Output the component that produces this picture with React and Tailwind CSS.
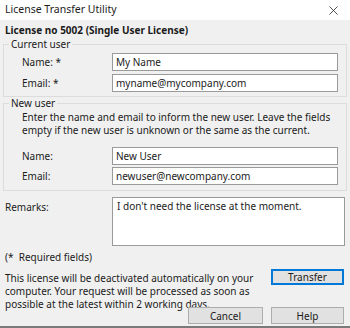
import { X } from 'lucide-react';

function Field({ label, value }) {
  return (
    <div className="flex items-center h-[18px]">
      <span className="w-[108px] pl-[18px]">{label}</span>
      <div className="flex-1 h-[18px] bg-white border border-[#9a9a9a] px-[3px] leading-[16px]">{value}</div>
    </div>
  );
}

export default function App() {
  return (
    <div
      className="w-[350px] h-[328px] bg-[#f0f0f0] text-[#1b1b1b] text-[10px] overflow-hidden flex flex-col border-b-2 border-[#7a7a7a]"
      style={{ fontFamily: '"Noto Sans", "Open Sans", sans-serif' }}
    >
      <div className="h-[20px] shrink-0 bg-white flex items-center justify-between pl-[5px] pr-[9px] text-[10.5px]">
        <span>License Transfer Utility</span>
        <X size={15} strokeWidth={1.2} />
      </div>

      <div className="px-[3px] pt-[3px] flex flex-col flex-1">
        <div className="font-bold pl-[2px] h-[14px] leading-[14px]">License no 5002 (Single User License)</div>

        <fieldset className="border border-[#dcdcdc] mt-[1px] pb-[4px] pr-[8px] flex flex-col gap-[3px]">
          <legend className="ml-[5px] px-[2px] leading-[12px]">Current user</legend>
          <div className="h-0" />
          <Field label="Name: *" value="My Name" />
          <Field label="Email: *" value="myname@mycompany.com" />
        </fieldset>

        <fieldset className="border border-[#dcdcdc] pb-[5px] pr-[8px] flex flex-col gap-[2px]">
          <legend className="ml-[5px] px-[2px] leading-[12px]">New user</legend>
          <p className="pl-[18px] leading-[13px] mt-[2px] mb-[8px]">
            Enter the name and email to inform the new user. Leave the fields empty if the new user is unknown or the same as the current.
          </p>
          <Field label="Name:" value="New User" />
          <Field label="Email:" value="newuser@newcompany.com" />
        </fieldset>

        <div className="flex mt-[6px] pr-[2px]">
          <span className="w-[109px] pl-[2px] pt-[3px]">Remarks:</span>
          <div className="flex-1 h-[49px] bg-white border border-[#9a9a9a] px-[4px] pt-[1px] leading-[14px]">
            I don't need the license at the moment.
          </div>
        </div>

        <div className="pl-[2px] mt-[4px] h-[14px] leading-[14px]">(*&nbsp; Required fields)</div>

        <div className="flex mt-[5px] relative pr-[3px]">
          <p className="w-[250px] pl-[2px] pt-[3px] leading-[13px] whitespace-nowrap">
            This license will be deactivated automatically on your
            <br />
            computer. Your request will be processed as soon as
            <br />
            possible at the latest within 2 working days.
          </p>
          <div className="flex-1 flex justify-end">
            <button className="w-[73px] h-[16px] bg-[#e1e1e1] border border-[#0078d7] outline outline-1 outline-[#0078d7] -outline-offset-2 leading-[12px]">Transfer</button>
          </div>
          <div className="absolute right-[3px] top-[38px] flex gap-[8px]">
            <button className="w-[75px] h-[17px] bg-[#e1e1e1] border border-[#adadad] leading-[14px]">Cancel</button>
            <button className="w-[73px] h-[17px] bg-[#e1e1e1] border border-[#adadad] leading-[14px]">Help</button>
          </div>
        </div>
      </div>
    </div>
  );
}
